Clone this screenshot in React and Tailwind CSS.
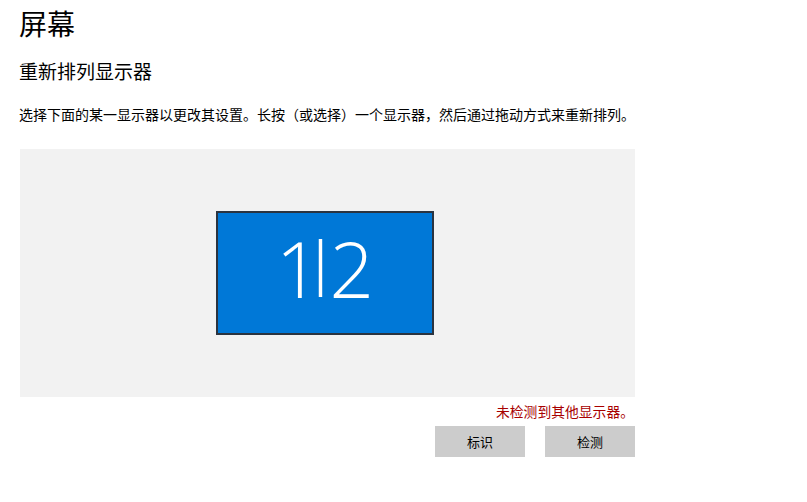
export default function App() {
  return (
    <div className="w-[807px] h-[502px] bg-white pl-[19px] font-['Noto_Sans_CJK_SC',sans-serif] text-black overflow-hidden">
      <h1 className="text-[28px] leading-[36px] pt-[5px] font-normal">屏幕</h1>
      <h2 className="text-[19px] leading-[26px] mt-[17px]">重新排列显示器</h2>
      <p className="text-[14px] leading-[20px] mt-[20px]">
        选择下面的某一显示器以更改其设置。长按（或选择）一个显示器，然后通过拖动方式来重新排列。
      </p>

      <div className="w-[615px] ml-px">
        {/* arrangement canvas */}
        <div className="mt-[25px] h-[248px] bg-[#f2f2f2] flex items-center justify-center">
          <div className="w-[218px] h-[124px] bg-[#0078d7] border-2 border-[#2b3440] flex items-center justify-center mr-[6px] mt-[-1px]">
            <div className="flex items-start text-white text-[78px] leading-none font-light font-['Open_Sans',sans-serif] mt-[-6px] ml-[1px]">
              <span className="tracking-[-21px]">1</span>
              <span className="inline-block origin-top scale-y-[0.74] mt-[3px] tracking-[-12px]">|</span>
              <span>2</span>
            </div>
          </div>
        </div>

        <div className="text-right text-[13.8px] leading-[18px] text-[#a80000] mt-[5px] pr-[1px]">
          未检测到其他显示器。
        </div>

        <div className="flex justify-end gap-[20px] mt-[6px]">
          <button className="w-[90px] h-[31px] bg-[#cccccc] text-[13px] text-black">标识</button>
          <button className="w-[90px] h-[31px] bg-[#cccccc] text-[13px] text-black">检测</button>
        </div>
      </div>
    </div>
  );
}
